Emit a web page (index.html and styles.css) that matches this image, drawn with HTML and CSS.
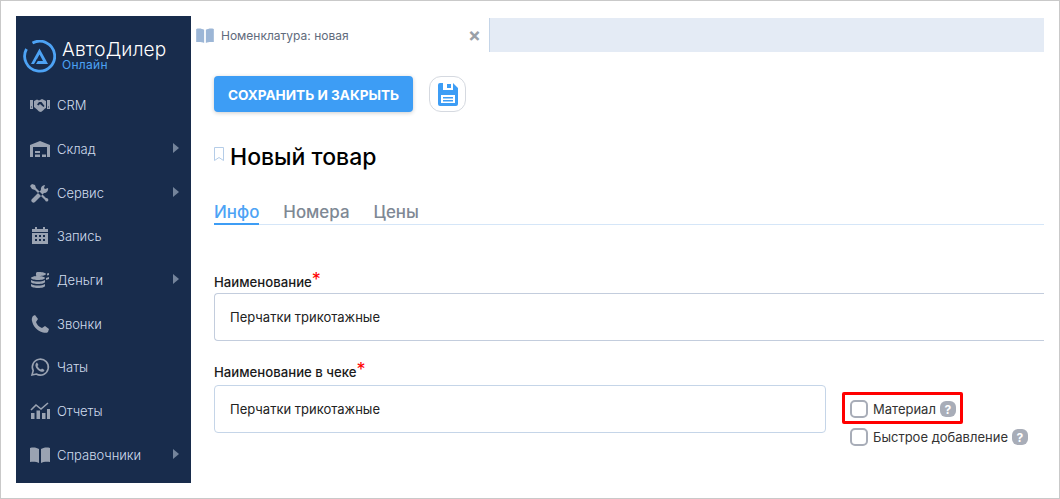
FILE: index.html
```html
<!DOCTYPE html>
<html lang="ru">
<head>
    <meta charset="UTF-8">
    <title>Номенклатура: новая</title>
    <link rel="stylesheet" href="styles.css">
</head>
<body>
    <div class="frame">
        <aside class="sidebar">
            <div class="logo">
                <svg class="logo-mark" width="33" height="33" viewBox="0 0 33 33">
                    <path d="M9.500 3 A15 15 0 1 1 3.500 9" fill="none" stroke="#4da3f5" stroke-width="2.800"/>
                    <path fill-rule="evenodd" d="M16.500 8.500 L25 24 H8 Z M16.500 14.500 L13 21 H20 Z" fill="#4da3f5"/>
                    <path d="M11 24 L14 19 H16 L13 24 Z" fill="#182c4c"/>
                </svg>
                <div class="logo-text">
                    <div class="logo-name">АвтоДилер</div>
                    <div class="logo-sub">Онлайн</div>
                </div>
            </div>
            <nav class="menu">
                <a class="menu-item"><svg class="menu-icon" viewBox="0 0 20 20"><path fill-rule="evenodd" d="M0 5h3v9H0zM17 5h3v9h-3zM1 11.500h1v1H1zM18 11.500h1v1h-1zM4 6l3-1.500 2 1 3-1.500 4 2v7l-1 .5-2 2-2 1.500-2-.5-2-2-3-2.500zM9 7l-2 2.500 1.500 1 1.500-1.500 3.500 3 1-1-3-4z"/></svg><span>CRM</span></a>
                <a class="menu-item has-sub"><svg class="menu-icon" viewBox="0 0 20 20"><path fill-rule="evenodd" d="M0 6l10-4 10 4v12h-3V8H3v10H0zM5 12h5v2H5zM5 15.500h5v2.500H5zM12 15.500h4v2.500h-4z"/></svg><span>Склад</span></a>
                <a class="menu-item has-sub"><svg class="menu-icon" viewBox="0 0 20 20"><path d="M2 1l3 1 1 3 10 10a2 2 0 0 1 2 3 2 2 0 0 1-3-1L5 7 2 6 0 3zM18 5l-3 1-1-1 1-3a4 4 0 0 0-4 5l-9 9a2 2 0 0 0 3 3l9-9a4 4 0 0 0 4-5z"/></svg><span>Сервис</span></a>
                <a class="menu-item"><svg class="menu-icon" viewBox="0 0 20 20"><path fill-rule="evenodd" d="M5 1h2v2h6V1h2v2h3v3H2V3h3zM2 7h16v11H2zM5 9v2h2V9zM9 9v2h2V9zM13 9v2h2V9zM5 13v2h2v-2zM9 13v2h2v-2zM13 13v2h2v-2z"/></svg><span>Запись</span></a>
                <a class="menu-item has-sub"><svg class="menu-icon" viewBox="0 0 20 20"><path d="M9 2c4 0 7 1 7 2s-3 2-7 2-3-.5-3-2 0-2 3-2zM1 8c0-1 3-2 7-2s7 1 7 2-3 2-7 2-7-1-7-2zM1 10c2 1 4 1.500 7 1.500s5-.5 7-1.500v2c0 1-3 2-7 2s-7-1-7-2zM1 14c2 1 4 1.500 7 1.500s5-.5 7-1.500v2c0 1-3 2-7 2s-7-1-7-2zM17 3.500l2-.5v2l-2 .5zM16 8l3-1v2l-3 1z"/></svg><span>Деньги</span></a>
                <a class="menu-item"><svg class="menu-icon" viewBox="0 0 20 20"><path d="M5 1l3 4-2 3c1 3 3 5 6 6l3-2 4 3-1 3c-1 1-3 1-5 .5C7 17 3 12 2 7c-.5-2 0-4 1-5z"/></svg><span>Звонки</span></a>
                <a class="menu-item"><svg class="menu-icon" viewBox="0 0 20 20"><path fill="none" stroke="currentColor" stroke-width="1.600" d="M2 18l1.200-4.300A8 8 0 1 1 6.300 17z"/><path d="M7 5.500l1.500 2.500-1 1c.5 1.500 2 3 3.500 3.500l1-1 2.500 1.500c-.5 2-2 2-4 1.500C8 13.500 6 11.500 5.500 9c-.3-1.500.3-3 1.500-3.500z"/></svg><span>Чаты</span></a>
                <a class="menu-item"><svg class="menu-icon" viewBox="0 0 20 20"><path d="M1 12h3.500v6H1zM6.500 9.500H10V18H6.500zM12 12h3.500v6H12zM17 8h3v10h-3z"/><path fill="none" stroke="currentColor" stroke-width="1.600" d="M1 9l5-5 5 4 7-6"/></svg><span>Отчеты</span></a>
                <a class="menu-item has-sub"><svg class="menu-icon" viewBox="0 0 20 20"><path d="M0 3c4-1 7 0 9 1v14c-2-1-5-1.500-9-1zM20 3c-4-1-7 0-9 1v14c2-1 5-1.500 9-1z"/></svg><span>Справочники</span></a>
            </nav>
        </aside>
        <main class="main">
            <div class="tabbar">
                <div class="tab">
                    <svg class="tab-icon" width="18" height="15" viewBox="0 0 20 17"><path d="M0 1c4-1 7 0 9 1v15c-2-1-5-1.500-9-1zM20 1c-4-1-7 0-9 1v15c2-1 5-1.500 9-1z"/></svg>
                    <span class="tab-title">Номенклатура: новая</span>
                    <span class="tab-close">×</span>
                </div>
                <div class="tab-rest"></div>
            </div>
            <div class="content">
                <div class="actions">
                    <button class="btn-save">СОХРАНИТЬ И ЗАКРЫТЬ</button>
                    <button class="btn-icon">
                        <svg width="20" height="23" viewBox="0 0 20 23"><path fill-rule="evenodd" d="M2 0h3v7h10V0l5 5v16a2 2 0 0 1-2 2H2a2 2 0 0 1-2-2V2a2 2 0 0 1 2-2zM9 1h4v4H9zM3 12v8h14v-8zM5 14h10v1.500H5zM5 17h10v1.500H5z" fill="#3d9df5"/></svg>
                    </button>
                </div>
                <div class="title-row">
                    <svg class="bookmark" width="10" height="14" viewBox="0 0 10 14"><path d="M.5.500h9v13L5 10.500.5 13.500z" fill="none" stroke="#b5cde8"/></svg>
                    <h1>Новый товар</h1>
                </div>
                <div class="tabs">
                    <a class="tabs-item active">Инфо</a>
                    <a class="tabs-item">Номера</a>
                    <a class="tabs-item">Цены</a>
                </div>
                <div class="field field-first">
                    <label>Наименование<sup>*</sup></label>
                    <div class="input input-wide">Перчатки трикотажные</div>
                </div>
                <div class="field">
                    <label>Наименование в чеке<sup>*</sup></label>
                    <div class="field-row">
                        <div class="input input-short">Перчатки трикотажные</div>
                        <div class="checks">
                            <div class="check check-marked"><span class="box"></span>Материал<span class="help">?</span></div>
                            <div class="check"><span class="box"></span>Быстрое добавление<span class="help">?</span></div>
                        </div>
                    </div>
                </div>
            </div>
        </main>
    </div>
</body>
</html>
```
FILE: styles.css
```css
* {
    box-sizing: border-box;
}

body {
    margin: 0;
    font-family: Inter, "Noto Sans", sans-serif;
    background: #fff;
}

.frame {
    display: flex;
    width: 1060px;
    height: 499px;
    padding: 15px 0 15px 15px;
    border: 1px solid #c9c9c9;
    overflow: hidden;
}

.sidebar {
    width: 175px;
    flex-shrink: 0;
    background: #182c4c;
    color: #fff;
}

.logo {
    display: flex;
    align-items: center;
    height: 64px;
    padding: 16px 0 0 7px;
}

.logo-text {
    margin-left: 6px;
}

.logo-name {
    font-size: 19px;
    font-weight: 300;
    line-height: 18px;
    letter-spacing: .2px;
}

.logo-sub {
    font-size: 12px;
    line-height: 12px;
    color: #4da3f5;
    letter-spacing: .3px;
}

.menu {
    margin-top: 3.500px;
}

.menu-item {
    display: flex;
    align-items: center;
    position: relative;
    height: 43.700px;
    padding-left: 14px;
    color: #d0dcec;
    font-size: 13px;
    font-weight: 300;
}

.menu-icon {
    width: 20px;
    height: 20px;
    margin-right: 7px;
    fill: #9aa3b2;
    color: #9aa3b2;
}

.has-sub::after {
    content: "";
    position: absolute;
    right: 12px;
    top: 16px;
    border-left: 6px solid #74849b;
    border-top: 5px solid transparent;
    border-bottom: 5px solid transparent;
}

.main {
    flex: 1;
    min-width: 0;
}

.tabbar {
    display: flex;
    height: 34px;
    margin: 2px 15px 0 0;
}

.tab {
    display: flex;
    align-items: center;
    width: 298px;
    padding: 0 8px 0 5px;
    font-size: 12px;
    color: #5f6b7c;
}

.tab-icon {
    fill: #9cb6d6;
    margin-right: 7px;
}

.tab-title {
    flex: 1;
}

.tab-close {
    font-size: 19px;
    font-weight: 700;
    color: #9aa0a8;
}

.tab-rest {
    flex: 1;
    background: #e4ebf5;
    border-left: 1px solid #c5d5e8;
}

.content {
    padding: 24px 15px 0 23px;
}

.actions {
    display: flex;
    align-items: center;
    gap: 16px;
}

.btn-save {
    width: 199px;
    height: 36px;
    padding: 1px 0 0;
    border: none;
    border-radius: 4px;
    background: #3d9df5;
    color: #fff;
    font: 700 13.600px Inter, sans-serif;
    box-shadow: 0 1px 4px rgba(0, 0, 0, .2);
}

.btn-icon {
    display: flex;
    align-items: center;
    justify-content: center;
    width: 37px;
    height: 36px;
    padding: 0;
    border: 1px solid #d5d9e0;
    border-radius: 12px;
    background: #fff;
}

.title-row {
    display: flex;
    align-items: center;
    gap: 6px;
    margin-top: 30px;
}

.bookmark {
    margin-top: -6px;
}

h1 {
    margin: 0;
    font-size: 23px;
    line-height: 30px;
    font-weight: 500;
    color: #000;
}

.tabs {
    display: flex;
    gap: 24px;
    margin-top: 29px;
    border-bottom: 1px solid #d5e6f8;
}

.tabs-item {
    height: 24px;
    margin-bottom: -1px;
    font-size: 16.900px;
    font-weight: 500;
    line-height: 22px;
    color: #7e8894;
}

.tabs-item.active {
    color: #4da3f5;
    border-bottom: 2px solid #3d9df5;
}

.field {
    margin-top: 20px;
}

.field-first {
    margin-top: 46px;
}

label {
    display: block;
    height: 22px;
    font-size: 13.200px;
    font-weight: 500;
    line-height: 23px;
    color: #1a1a1a;
}

sup {
    color: #f00;
    font-size: 18px;
    line-height: 0;
    vertical-align: 0;
    position: relative;
    top: -1px;
    font-weight: 400;
}

.input {
    display: flex;
    align-items: center;
    height: 48px;
    padding-left: 15px;
    border: 1px solid #c5d5e8;
    border-radius: 4px;
    font-size: 13px;
    color: #222;
}

.input-wide {
    border-color: #c3cddd;
    border-right: none;
    border-radius: 4px 0 0 4px;
}

.input-short {
    width: 612px;
}

.field-row {
    display: flex;
    gap: 24px;
    margin-top: 2px;
}

.checks {
    display: flex;
    flex-direction: column;
    gap: 10px;
    margin-top: 15px;
}

.check {
    display: flex;
    align-items: center;
    height: 18px;
    font-size: 13px;
    color: #333;
}

.check-marked {
    width: 121px;
    height: 32px;
    margin: -8px 0 -6px -8px;
    padding: 5px 0 3px 5px;
    border: 3px solid #f00;
    border-radius: 2px;
}

.box {
    width: 18px;
    height: 18px;
    margin-right: 5px;
    border: 2px solid #a8adb8;
    border-radius: 5px;
}

.help {
    display: inline-flex;
    align-items: center;
    justify-content: center;
    width: 16px;
    height: 16px;
    margin-left: 4px;
    border-radius: 6px;
    background: #a8adb8;
    color: #fff;
    font-size: 12px;
    font-weight: 700;
}
```
